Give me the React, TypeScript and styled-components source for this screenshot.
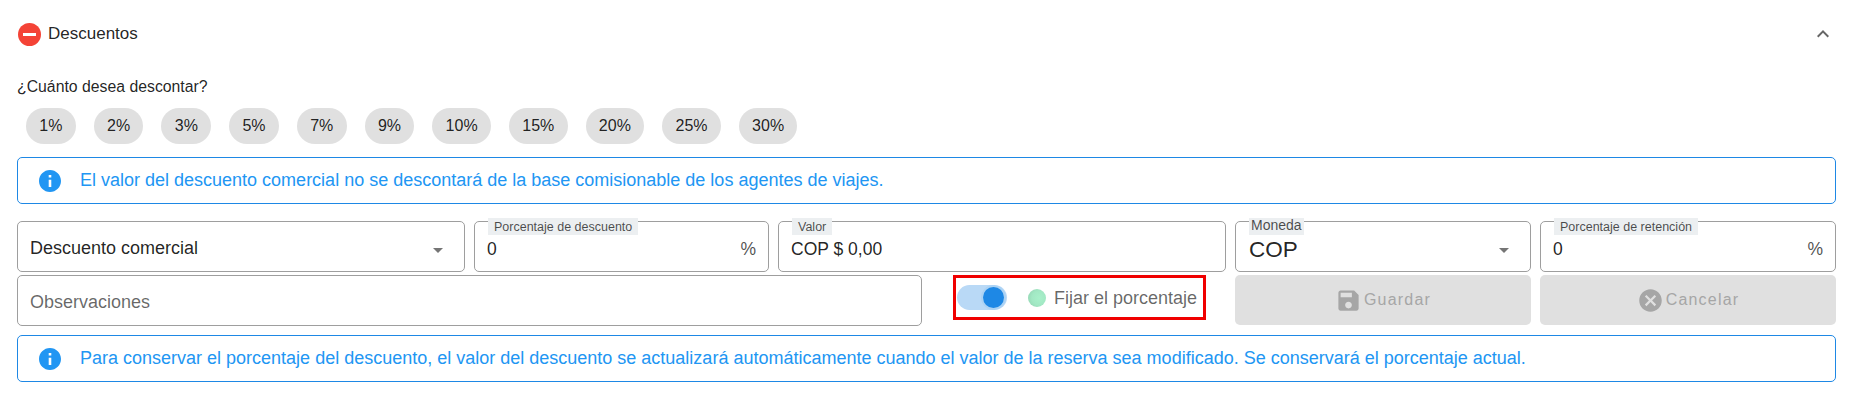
import React from 'react';
import styled, { createGlobalStyle } from 'styled-components';

const GlobalStyle = createGlobalStyle`
  html, body {
    margin: 0;
    padding: 0;
    background: #ffffff;
  }
  body {
    font-family: "Liberation Sans", Arial, sans-serif;
    color: rgba(0, 0, 0, 0.87);
  }
`;

const percents = ['1%', '2%', '3%', '5%', '7%', '9%', '10%', '15%', '20%', '25%', '30%'];

const InfoIcon = () => (
  <svg width="24" height="24" viewBox="0 0 24 24" fill="#2196f3">
    <path d="M12 1C5.92 1 1 5.92 1 12s4.92 11 11 11 11-4.92 11-11S18.08 1 12 1zm1.3 17h-2.6v-7.2h2.6V18zm0-9.4h-2.6V6h2.6v2.6z" />
  </svg>
);

const App = () => {
  return (
    <>
      <GlobalStyle />
      <Page>
        <Header>
          <HeaderTitle>
            <MinusBadge>
              <span />
            </MinusBadge>
            Descuentos
          </HeaderTitle>
          <svg width="24" height="24" viewBox="0 0 24 24" fill="#666666">
            <path d="M12 8l-6 6 1.41 1.41L12 10.83l4.59 4.58L18 14z" />
          </svg>
        </Header>

        <Question>¿Cuánto desea descontar?</Question>
        <Chips>
          {percents.map((p) => (
            <Chip key={p}>{p}</Chip>
          ))}
        </Chips>

        <Alert>
          <InfoIcon />
          El valor del descuento comercial no se descontará de la base comisionable de los agentes de viajes.
        </Alert>

        <FieldRow>
          <Field $width={448}>
            <SelectValue>Descuento comercial</SelectValue>
            <Caret />
          </Field>
          <Field $width={295}>
            <Legend>Porcentaje de descuento</Legend>
            <FieldValue>0</FieldValue>
            <Unit>%</Unit>
          </Field>
          <Field $width={448}>
            <Legend>Valor</Legend>
            <FieldValue>COP $ 0,00</FieldValue>
          </Field>
          <Field $width={296}>
            <CurrencyLegend>Moneda</CurrencyLegend>
            <CurrencyValue>COP</CurrencyValue>
            <Caret />
          </Field>
          <Field $width={296}>
            <Legend>Porcentaje de retención</Legend>
            <FieldValue>0</FieldValue>
            <Unit>%</Unit>
          </Field>
        </FieldRow>

        <ActionRow>
          <Field $width={905}>
            <Placeholder>Observaciones</Placeholder>
          </Field>
          <Highlight>
            <Switch>
              <Knob />
            </Switch>
            <Dot />
            <SwitchLabel>Fijar el porcentaje</SwitchLabel>
          </Highlight>
          <DisabledButton>
            <svg width="27" height="27" viewBox="0 0 24 24" fill="#a6a6a6">
              <path d="M17 3H5c-1.11 0-2 .9-2 2v14c0 1.1.89 2 2 2h14c1.1 0 2-.9 2-2V7l-4-4zm-5 16c-1.66 0-3-1.34-3-3s1.34-3 3-3 3 1.34 3 3-1.34 3-3 3zm3-10H5V5h10v4z" />
            </svg>
            Guardar
          </DisabledButton>
          <DisabledButton>
            <svg width="27" height="27" viewBox="0 0 24 24" fill="#a6a6a6">
              <path d="M12 2C6.47 2 2 6.47 2 12s4.47 10 10 10 10-4.47 10-10S17.53 2 12 2zm5 13.59L15.59 17 12 13.41 8.41 17 7 15.59 10.59 12 7 8.41 8.41 7 12 10.59 15.59 7 17 8.41 13.41 12 17 15.59z" />
            </svg>
            Cancelar
          </DisabledButton>
        </ActionRow>

        <Alert $spaced>
          <InfoIcon />
          Para conservar el porcentaje del descuento, el valor del descuento se actualizará automáticamente cuando el valor de la reserva sea modificado. Se conservará el porcentaje actual.
        </Alert>
      </Page>
    </>
  );
};

const Page = styled.div`
  width: 1854px;
  height: 418px;
  padding: 0 18px 0 17px;
  box-sizing: border-box;
  overflow: hidden;
`;

const Header = styled.div`
  height: 68px;
  display: flex;
  align-items: center;
  justify-content: space-between;
  padding-right: 1px;
`;

const HeaderTitle = styled.div`
  display: flex;
  align-items: center;
  gap: 7px;
  font-size: 17px;
  color: rgba(0, 0, 0, 0.87);
`;

const MinusBadge = styled.div`
  width: 23px;
  height: 23px;
  margin-left: 1px;
  border-radius: 50%;
  background: #f44336;
  display: flex;
  align-items: center;
  justify-content: center;

  span {
    width: 13px;
    height: 3px;
    background: #ffffff;
  }
`;

const Question = styled.div`
  font-size: 15.8px;
  line-height: 16px;
  margin-top: 11px;
  color: rgba(0, 0, 0, 0.87);
`;

const Chips = styled.div`
  display: flex;
  gap: 18px;
  margin: 13px 0 13px 9px;
`;

const Chip = styled.div`
  height: 36px;
  padding: 0 13.3px;
  border-radius: 18px;
  background: #e0e0e0;
  display: flex;
  align-items: center;
  font-size: 16px;
  color: rgba(0, 0, 0, 0.87);
`;

const Alert = styled.div<{ $spaced?: boolean }>`
  height: 47px;
  box-sizing: border-box;
  margin-top: ${(p) => (p.$spaced ? '9px' : '0')};
  padding: 0 14px 0 20px;
  border: 1px solid #1e88e5;
  border-radius: 5px;
  display: flex;
  align-items: center;
  gap: 18px;
  font-size: 18px;
  color: #2196f3;
`;

const FieldRow = styled.div`
  display: flex;
  gap: 9px;
  margin-top: 17px;
`;

const ActionRow = styled.div`
  display: flex;
  margin-top: 3px;
`;

const Field = styled.div<{ $width: number }>`
  position: relative;
  width: ${(p) => p.$width}px;
  height: 51px;
  box-sizing: border-box;
  padding: 0 12px;
  border: 1px solid #9e9e9e;
  border-radius: 5px;
  display: flex;
  align-items: center;
  justify-content: space-between;
  flex-shrink: 0;
`;

const Legend = styled.span`
  position: absolute;
  top: -4px;
  left: 13px;
  height: 17px;
  padding: 0 6px;
  background: #eceff1;
  font-size: 12.5px;
  line-height: 18px;
  color: rgba(0, 0, 0, 0.7);
`;

const CurrencyLegend = styled(Legend)`
  padding: 0 2px;
  font-size: 14px;
  line-height: 15px;
`;

const FieldValue = styled.span`
  margin-top: 5px;
  font-size: 17.5px;
  color: rgba(0, 0, 0, 0.87);
`;

const SelectValue = styled.span`
  margin-top: 4px;
  font-size: 18px;
  color: rgba(0, 0, 0, 0.87);
`;

const CurrencyValue = styled.span`
  margin: 6px 0 0 1px;
  font-size: 22.5px;
  color: rgba(0, 0, 0, 0.87);
`;

const Unit = styled(FieldValue)`
  color: rgba(0, 0, 0, 0.7);
`;

const Placeholder = styled.span`
  margin-top: 3px;
  font-size: 18px;
  color: rgba(0, 0, 0, 0.6);
`;

const Caret = styled.span`
  width: 0;
  height: 0;
  margin: 8px 9px 0 0;
  border-left: 5px solid transparent;
  border-right: 5px solid transparent;
  border-top: 5px solid #757575;
`;

const Highlight = styled.div`
  width: 253px;
  height: 45px;
  box-sizing: border-box;
  margin-left: 31px;
  padding-left: 1px;
  border: 3px solid #f00000;
  display: flex;
  align-items: center;
  flex-shrink: 0;
`;

const Switch = styled.div`
  position: relative;
  width: 50px;
  height: 25px;
  border-radius: 13px;
  background: #b9d9f6;
`;

const Knob = styled.div`
  position: absolute;
  top: 2px;
  right: 3px;
  width: 21px;
  height: 21px;
  border-radius: 50%;
  background: #1e88e5;
  box-shadow: 0 0 0 2px rgba(30, 136, 229, 0.08);
`;

const Dot = styled.div`
  width: 18px;
  height: 18px;
  margin-left: 21px;
  border-radius: 50%;
  background: radial-gradient(circle at 62% 50%, #a8f0ca 0%, #a2e8c4 50%, #8fcfae 100%);
`;

const SwitchLabel = styled.span`
  margin: 1px 0 0 8px;
  font-size: 18px;
  color: rgba(0, 0, 0, 0.6);
`;

const DisabledButton = styled.div`
  width: 296px;
  height: 50px;
  margin-left: 29px;
  border-radius: 5px;
  background: #e0e0e0;
  display: flex;
  align-items: center;
  justify-content: center;
  gap: 2px;
  font-size: 16px;
  letter-spacing: 1.2px;
  color: #a6a6a6;
  flex-shrink: 0;

  & + & {
    margin-left: 9px;
  }
`;

export default App;
